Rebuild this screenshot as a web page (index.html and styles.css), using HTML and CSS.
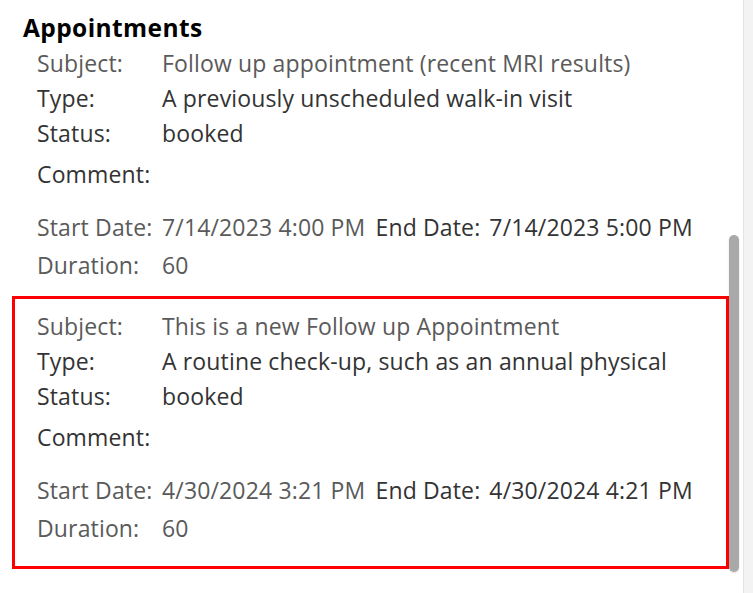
FILE: index.html
```html
<!DOCTYPE html>
<html lang="en">
<head>
  <meta charset="UTF-8">
  <meta name="viewport" content="width=device-width, initial-scale=1.0">
  <title>Appointments</title>
  <link rel="stylesheet" href="styles.css">
</head>
<body>
  <div class="panel">
    <h2 class="panel-title">Appointments</h2>

    <div class="appointment">
      <div class="field"><span class="label soft">Subject:</span><span class="value soft">Follow up appointment (recent MRI results)</span></div>
      <div class="field"><span class="label">Type:</span><span class="value">A previously unscheduled walk-in visit</span></div>
      <div class="field"><span class="label">Status:</span><span class="value">booked</span></div>
      <div class="field comment"><span class="label">Comment:</span><span class="value"></span></div>
      <div class="field dates">
        <span class="label soft">Start Date:</span><span class="value soft">7/14/2023 4:00 PM</span>
        <span class="label-inline">End Date:</span><span class="value">7/14/2023 5:00 PM</span>
      </div>
      <div class="field duration"><span class="label soft">Duration:</span><span class="value soft">60</span></div>
    </div>

    <div class="appointment selected">
      <div class="field"><span class="label soft">Subject:</span><span class="value soft">This is a new Follow up Appointment</span></div>
      <div class="field"><span class="label">Type:</span><span class="value">A routine check-up, such as an annual physical</span></div>
      <div class="field"><span class="label">Status:</span><span class="value">booked</span></div>
      <div class="field comment"><span class="label">Comment:</span><span class="value"></span></div>
      <div class="field dates">
        <span class="label soft">Start Date:</span><span class="value soft">4/30/2024 3:21 PM</span>
        <span class="label-inline">End Date:</span><span class="value">4/30/2024 4:21 PM</span>
      </div>
      <div class="field duration"><span class="label soft">Duration:</span><span class="value soft">60</span></div>
    </div>
  </div>

  <div class="scroll-track">
    <div class="scroll-thumb"></div>
  </div>
  <div class="edge"></div>
</body>
</html>
```
FILE: styles.css
```css
:root {
  --text-dark: #333333;
  --text-soft: #5a5a5a;
  --selected: #ff0000;
  --thumb: #a9a9a9;
  --edge-bg: #f3f3f3;
  --edge-line: #e4e4e4;
}

* {
  box-sizing: border-box;
}

html, body {
  height: 100%;
}

body {
  margin: 0;
  background: #ffffff;
  font-family: "Open Sans", "Noto Sans", sans-serif;
  font-size: 23px;
  letter-spacing: 0.15px;
  color: var(--text-dark);
  display: flex;
  overflow: hidden;
}

.panel {
  width: 729px;
  flex: none;
}

.panel-title {
  margin: 0 0 0 23px;
  padding-top: 13px;
  font-size: 24.5px;
  font-weight: 700;
  letter-spacing: 0.4px;
  line-height: 30px;
  color: #000000;
}

.appointment {
  margin-left: 12px;
  border: 3px solid transparent;
  padding: 0 22px 10px;
}

.appointment.selected {
  border-color: var(--selected);
  padding-top: 10px;
  padding-bottom: 20px;
}

.field {
  display: flex;
  line-height: 35px;
  white-space: nowrap;
}

.label {
  width: 125px;
  flex: none;
}

.label-inline {
  margin: 0 9px 0 10px;
}

.soft {
  color: var(--text-soft);
}

.field.comment {
  margin-top: 6px;
}

.field.dates {
  margin-top: 18px;
}

.field.duration {
  margin-top: 3px;
}

.scroll-track {
  width: 10px;
  flex: none;
  padding-top: 235px;
}

.scroll-thumb {
  height: 337px;
  border-radius: 5px;
  background: var(--thumb);
  box-shadow: 0 1px 2px rgba(0, 0, 0, 0.15);
}

.edge {
  width: 10px;
  margin-left: 4px;
  flex: none;
  background: var(--edge-bg);
  border-left: 1px solid var(--edge-line);
}
```
